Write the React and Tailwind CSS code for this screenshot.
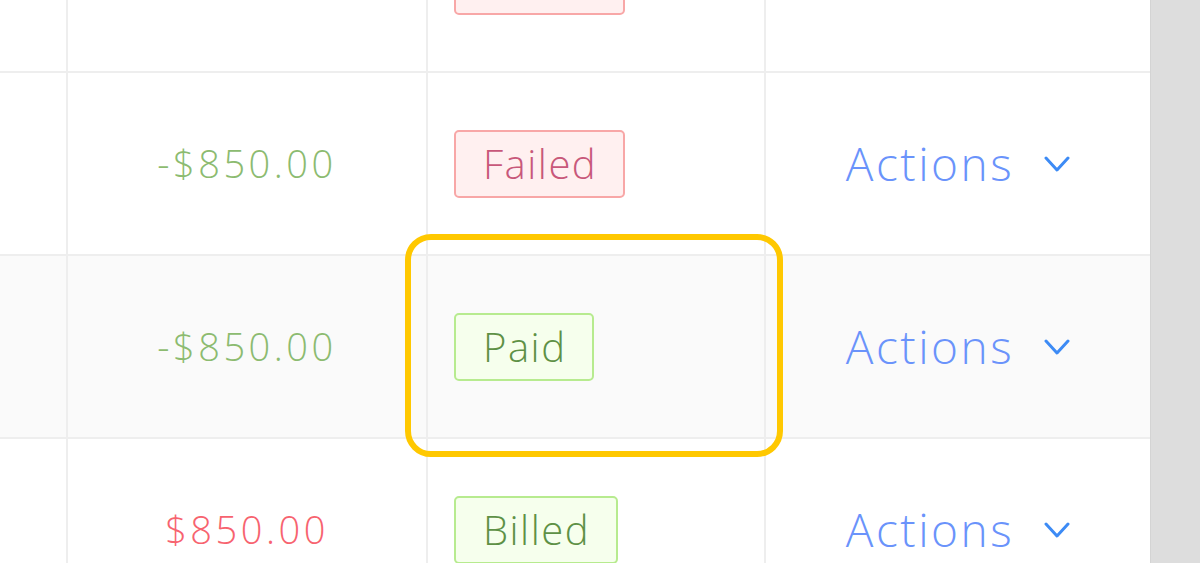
import React from "react";

const rows = [
  { amount: "-$850.00", tone: "red", status: "Failed", hover: false },
  { amount: "-$850.00", tone: "green", status: "Failed", hover: false },
  { amount: "-$850.00", tone: "green", status: "Paid", hover: true },
  { amount: "$850.00", tone: "red", status: "Billed", hover: false },
];

function StatusTag({ status }) {
  const failed = status === "Failed";
  return (
    <span
      className={`inline-flex items-center h-[68px] pl-[27px] pr-[26px] rounded-[5px] border-2 text-[40px] tracking-[1.5px] leading-none ${
        failed
          ? "bg-[#fff0f0] border-[#f8a7a7] text-[#c8587a]"
          : "bg-[#f6ffed] border-[#b7eb8f] text-[#5e9146]"
      }`}
    >
      {status}
    </span>
  );
}

function Chevron() {
  return (
    <svg width="26" height="18" viewBox="0 0 26 18" fill="none">
      <path d="M2 3 L13 15 L24 3" stroke="#3d8bf5" strokeWidth="3" strokeLinecap="round" strokeLinejoin="round" />
    </svg>
  );
}

function Row({ amount, tone, status, hover }) {
  return (
    <div
      className={`shrink-0 grid grid-cols-[66px_360px_338px_386px] h-[183px] border-b-2 border-[#eeeeee] ${
        hover ? "bg-[#fafafa]" : "bg-white"
      }`}
    >
      <div />
      <div className="border-l-2 border-[#eeeeee] flex items-center justify-center">
        <span
          className={`text-[38px] tracking-[3.5px] ${
            tone === "red" ? "text-[#f7636f]" : "text-[#8cbb70]"
          }`}
        >
          {amount}
        </span>
      </div>
      <div className="border-l-2 border-[#eeeeee] flex items-center pl-[26px]">
        <StatusTag status={status} />
      </div>
      <div className="border-l-2 border-[#eeeeee] flex items-center justify-center gap-[30px]">
        <span className="text-[46px] tracking-[2.5px] text-[#6a93fb]">Actions</span>
        <Chevron />
      </div>
    </div>
  );
}

export default function App() {
  return (
    <div
      className="relative w-[1200px] h-[563px] overflow-hidden bg-white flex font-[350]"
      style={{ fontFamily: '"Open Sans", "Liberation Sans", sans-serif' }}
    >
      <div className="w-[1150px] shrink-0 mt-[-110px] flex flex-col">
        {rows.map((r, i) => (
          <Row key={i} {...r} />
        ))}
      </div>
      <div className="w-[50px] h-full bg-[#dddddd] border-l border-[#d4d4d4]" />

      {/* highlight ring */}
      <div className="absolute left-[405px] top-[234px] w-[378px] h-[223px] rounded-[26px] border-[6px] border-[#ffc800] pointer-events-none" />
    </div>
  );
}
